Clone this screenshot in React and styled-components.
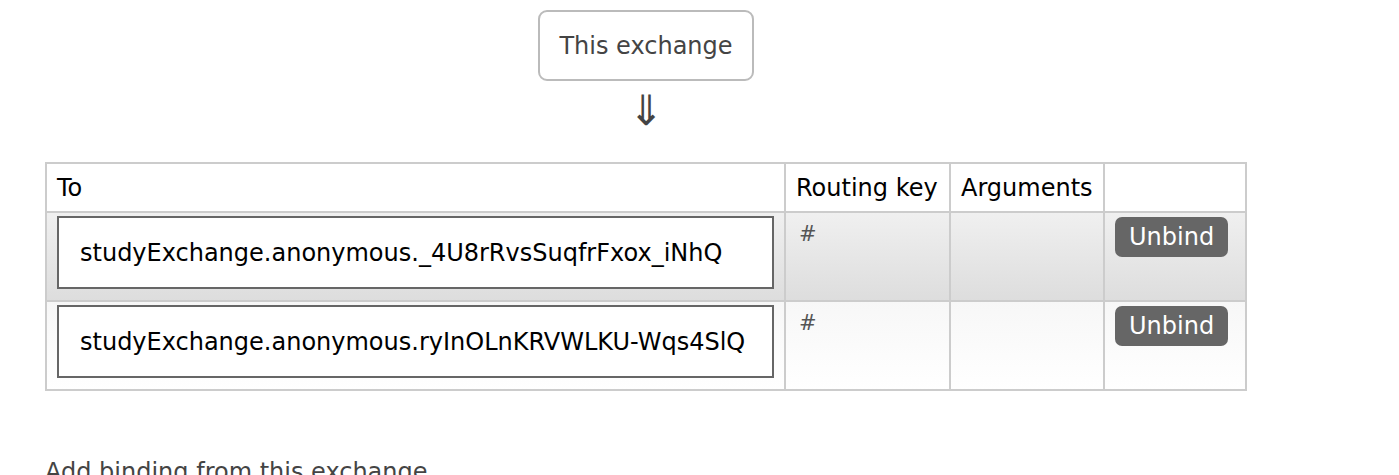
import styled, { createGlobalStyle } from "styled-components";

const GlobalStyle = createGlobalStyle`
  html, body {
    margin: 0;
    padding: 0;
    background: #fff;
  }
  body {
    font-family: "DejaVu Sans", Verdana, sans-serif;
    font-size: 24px;
    color: #444;
  }
`;

const Page = styled.div`
  width: 1399px;
  height: 475px;
  overflow: hidden;
  padding: 10px 45px 0;
  box-sizing: border-box;
`;

const Flow = styled.div`
  width: 1202px;
  display: flex;
  flex-direction: column;
  align-items: center;
`;

const ExchangeBox = styled.div`
  border: 2px solid #bbb;
  border-radius: 9px;
  padding: 0 19px;
  height: 71px;
  box-sizing: border-box;
  display: flex;
  align-items: center;
  color: #444;
`;

const Arrow = styled.div`
  font-size: 42px;
  line-height: 44px;
  margin-top: 8px;
  color: #444;
`;

const Table = styled.table`
  margin-top: 29px;
  border-collapse: collapse;
  width: 1202px;
  color: #000;
`;

const Th = styled.th`
  border: 2px solid #ccc;
  text-align: left;
  font-weight: normal;
  padding: 0 10px;
  height: 49px;
  box-sizing: border-box;
  width: ${(p) => p.$w || "auto"};
  white-space: nowrap;
`;

const Row = styled.tr`
  background: ${(p) =>
    p.$alt
      ? "linear-gradient(#f7f7f7, #ffffff)"
      : "linear-gradient(#f0f0f0, #dddddd)"};
`;

const Td = styled.td`
  border: 2px solid #ccc;
  vertical-align: top;
  padding: 3px 10px 11px;
`;

const NameBox = styled.div`
  border: 2px solid #666;
  background: #fff;
  height: 73px;
  box-sizing: border-box;
  display: flex;
  align-items: center;
  padding: 0 21px;
  color: #000;
  white-space: nowrap;
`;

const Key = styled.span`
  display: block;
  color: #555;
  font-size: 21px;
  padding: 6px 0 0 3px;
`;

const Button = styled.button`
  font-family: inherit;
  font-size: 24px;
  background: #666;
  color: #fff;
  border: none;
  border-radius: 7px;
  padding: 6px 14px;
  line-height: 28px;
  margin-top: 1px;
`;

const Footer = styled.div`
  margin-top: 67px;
  color: #444;
`;

const bindings = [
  "studyExchange.anonymous._4U8rRvsSuqfrFxox_iNhQ",
  "studyExchange.anonymous.ryInOLnKRVWLKU-Wqs4SlQ",
];

export default function App() {
  return (
    <Page>
      <GlobalStyle />
      <Flow>
        <ExchangeBox>This exchange</ExchangeBox>
        <Arrow>⇓</Arrow>
        <Table>
          <thead>
            <tr>
              <Th>To</Th>
              <Th $w="165px">Routing key</Th>
              <Th $w="154px">Arguments</Th>
              <Th $w="142px"></Th>
            </tr>
          </thead>
          <tbody>
            {bindings.map((b, i) => (
              <Row key={b} $alt={i % 2 === 1}>
                <Td>
                  <NameBox>{b}</NameBox>
                </Td>
                <Td>
                  <Key>#</Key>
                </Td>
                <Td></Td>
                <Td>
                  <Button>Unbind</Button>
                </Td>
              </Row>
            ))}
          </tbody>
        </Table>
      </Flow>
      <Footer>Add binding from this exchange</Footer>
    </Page>
  );
}
